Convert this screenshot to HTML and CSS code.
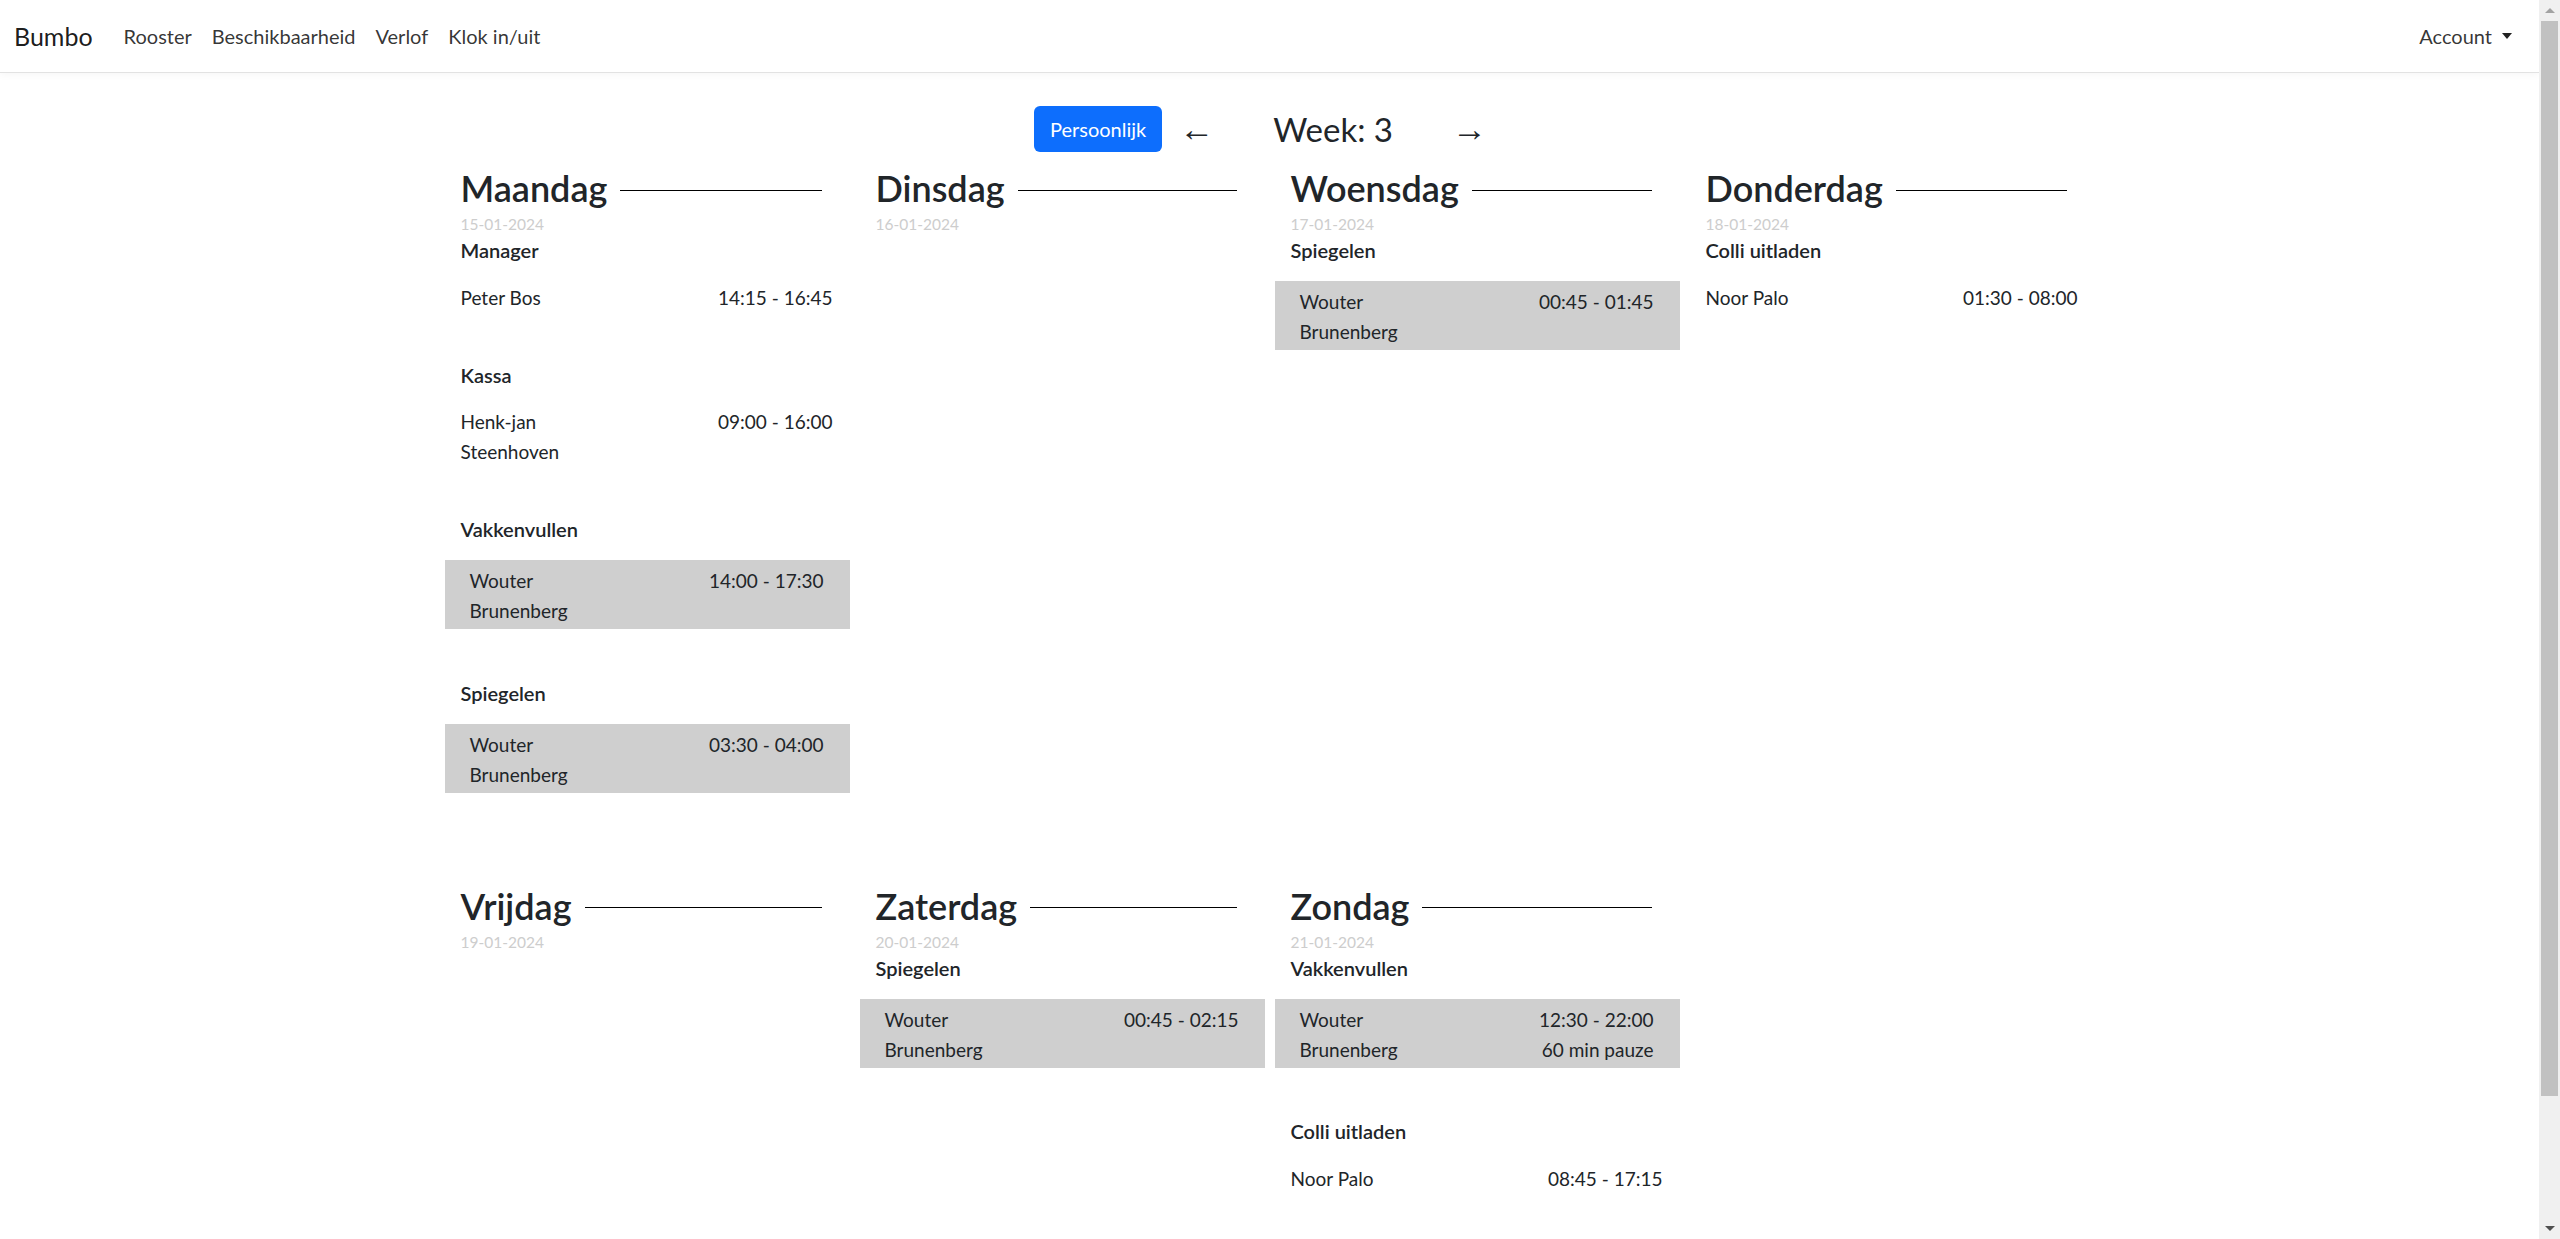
FILE: index.html
```html
<!DOCTYPE html>
<html lang="nl">
<head>
<meta charset="utf-8">
<title>Bumbo - Rooster</title>
<link rel="stylesheet" href="styles.css">
</head>
<body>
<div class="viewport">
  <nav class="navbar">
    <div class="nav-left">
      <a class="brand" href="#">Bumbo</a>
      <ul class="nav-links">
        <li><a href="#">Rooster</a></li>
        <li><a href="#">Beschikbaarheid</a></li>
        <li><a href="#">Verlof</a></li>
        <li><a href="#">Klok in/uit</a></li>
      </ul>
    </div>
    <a class="account" href="#">Account<span class="caret"></span></a>
  </nav>

  <main class="container">
    <div class="week-nav">
      <button class="btn-primary" type="button">Persoonlijk</button>
      <a class="arrow arrow-prev" href="#">←</a>
      <h3 class="week-title">Week: 3</h3>
      <a class="arrow arrow-next" href="#">→</a>
    </div>

    <div class="week-grid">
      <section class="day">
        <div class="day-head"><h3 class="day-name">Maandag</h3><span class="day-rule"></span></div>
        <div class="day-date">15-01-2024</div>
        <div class="roles">
          <div class="role">
            <h6 class="role-name">Manager</h6>
            <div class="shift"><span class="shift-name">Peter Bos</span><span class="shift-time">14:15 - 16:45</span></div>
          </div>
          <div class="role">
            <h6 class="role-name">Kassa</h6>
            <div class="shift"><span class="shift-name">Henk-jan Steenhoven</span><span class="shift-time">09:00 - 16:00</span></div>
          </div>
          <div class="role">
            <h6 class="role-name">Vakkenvullen</h6>
            <div class="shift shift-own"><span class="shift-name">Wouter Brunenberg</span><span class="shift-time">14:00 - 17:30</span></div>
          </div>
          <div class="role">
            <h6 class="role-name">Spiegelen</h6>
            <div class="shift shift-own"><span class="shift-name">Wouter Brunenberg</span><span class="shift-time">03:30 - 04:00</span></div>
          </div>
        </div>
      </section>

      <section class="day">
        <div class="day-head"><h3 class="day-name">Dinsdag</h3><span class="day-rule"></span></div>
        <div class="day-date">16-01-2024</div>
      </section>

      <section class="day">
        <div class="day-head"><h3 class="day-name">Woensdag</h3><span class="day-rule"></span></div>
        <div class="day-date">17-01-2024</div>
        <div class="roles">
          <div class="role">
            <h6 class="role-name">Spiegelen</h6>
            <div class="shift shift-own"><span class="shift-name">Wouter Brunenberg</span><span class="shift-time">00:45 - 01:45</span></div>
          </div>
        </div>
      </section>

      <section class="day">
        <div class="day-head"><h3 class="day-name">Donderdag</h3><span class="day-rule"></span></div>
        <div class="day-date">18-01-2024</div>
        <div class="roles">
          <div class="role">
            <h6 class="role-name">Colli uitladen</h6>
            <div class="shift"><span class="shift-name">Noor Palo</span><span class="shift-time">01:30 - 08:00</span></div>
          </div>
        </div>
      </section>

      <section class="day">
        <div class="day-head"><h3 class="day-name">Vrijdag</h3><span class="day-rule"></span></div>
        <div class="day-date">19-01-2024</div>
      </section>

      <section class="day">
        <div class="day-head"><h3 class="day-name">Zaterdag</h3><span class="day-rule"></span></div>
        <div class="day-date">20-01-2024</div>
        <div class="roles">
          <div class="role">
            <h6 class="role-name">Spiegelen</h6>
            <div class="shift shift-own"><span class="shift-name">Wouter Brunenberg</span><span class="shift-time">00:45 - 02:15</span></div>
          </div>
        </div>
      </section>

      <section class="day">
        <div class="day-head"><h3 class="day-name">Zondag</h3><span class="day-rule"></span></div>
        <div class="day-date">21-01-2024</div>
        <div class="roles">
          <div class="role">
            <h6 class="role-name">Vakkenvullen</h6>
            <div class="shift shift-own"><span class="shift-name">Wouter Brunenberg</span><span class="shift-time">12:30 - 22:00<br>60 min pauze</span></div>
          </div>
          <div class="role">
            <h6 class="role-name">Colli uitladen</h6>
            <div class="shift"><span class="shift-name">Noor Palo</span><span class="shift-time">08:45 - 17:15</span></div>
          </div>
        </div>
      </section>
    </div>
  </main>
</div>
<div class="scrollbar" aria-hidden="true">
  <span class="sb-arrow sb-up"></span>
  <span class="sb-thumb"></span>
  <span class="sb-track"></span>
  <span class="sb-arrow sb-down"></span>
</div>
</body>
</html>
```
FILE: styles.css
```css
* { box-sizing: border-box; }
html, body { margin: 0; height: 100%; }
body {
  display: flex;
  overflow: hidden;
  font-family: "Lato", "Noto Sans", sans-serif;
  font-size: 19px;
  line-height: 30px;
  color: #212529;
  background: #fff;
}
.viewport { flex: 1; min-width: 0; height: 100vh; overflow: hidden; }

/* navbar */
.navbar {
  height: 73px;
  border-bottom: 1px solid #e2e2e2;
  box-shadow: 0 2px 8px rgba(0, 0, 0, 0.04);
  display: flex;
  align-items: center;
  justify-content: space-between;
  padding: 0 27px 0 14px;
}
.nav-left { display: flex; align-items: center; }
.brand { font-size: 25px; line-height: 30px; color: rgba(0, 0, 0, 0.9); text-decoration: none; margin-right: 21px; }
.nav-links { display: flex; list-style: none; margin: 0; padding: 0; }
.nav-links a {
  display: block;
  font-size: 20px;
  line-height: 30px;
  padding: 0 10px;
  color: rgba(0, 0, 0, 0.8);
  text-decoration: none;
}
.account {
  display: flex;
  align-items: center;
  font-size: 20px;
  line-height: 30px;
  color: rgba(0, 0, 0, 0.8);
  text-decoration: none;
}
.caret {
  margin-left: 10px;
  width: 0;
  height: 0;
  border-top: 6px solid #222;
  border-left: 5px solid transparent;
  border-right: 5px solid transparent;
}

/* main */
.container { width: 1650px; margin: 0 auto; }
.week-nav {
  display: flex;
  justify-content: center;
  align-items: center;
  margin-top: 33px;
  padding-right: 18px;
}
.btn-primary {
  font: inherit;
  font-size: 20px;
  line-height: 30px;
  color: #fff;
  background: #0d6efd;
  border: 0;
  border-radius: 6px;
  padding: 8px 16px;
}
.arrow {
  font-family: "Liberation Sans", sans-serif;
  font-size: 35px;
  line-height: 30px;
  color: #212529;
  text-decoration: none;
}
.arrow-prev { margin-left: 17px; }
.week-title {
  margin: 0 59px;
  font-size: 33px;
  line-height: 42px;
  font-weight: 400;
}

.week-grid {
  display: grid;
  grid-template-columns: repeat(4, 405px);
  column-gap: 10px;
  row-gap: 92px;
  margin-top: 15px;
}
.day-head {
  display: flex;
  align-items: center;
  padding: 0 28px 0 16px;
}
.day-name {
  margin: 0;
  font-size: 36px;
  line-height: 42px;
  font-weight: 600;
}
.day-rule {
  flex: 1;
  height: 1px;
  margin: 4px 0 0 13px;
  background: #000;
}
.day-date {
  margin-top: 3px;
  padding-left: 16px;
  font-size: 15.5px;
  line-height: 25px;
  color: #cdcdcd;
}
.roles { display: flex; flex-direction: column; gap: 50.5px; }
.role-name {
  margin: 0 0 19px;
  padding: 1px 0 0 16px;
  font-size: 20px;
  line-height: 24px;
  font-weight: 600;
}
.shift {
  display: grid;
  grid-template-columns: 42% 1fr;
  padding: 1.5px 17px 0 16px;
  margin-bottom: -1.5px;
}
.shift-time { text-align: right; }
.shift-own {
  background: #cfcfcf;
  padding: 6px 26px 3px 25px;
  margin-bottom: 0;
}

/* fake window scrollbar */
.scrollbar {
  flex: none;
  width: 21px;
  height: 100vh;
  background: #f0f0f0;
  display: flex;
  flex-direction: column;
  align-items: center;
}
.sb-arrow { flex: none; height: 21px; display: flex; align-items: center; justify-content: center; }
.sb-arrow::before { content: ""; width: 0; height: 0; border-left: 5px solid transparent; border-right: 5px solid transparent; }
.sb-up::before { border-bottom: 5px solid #a3a3a3; }
.sb-down::before { border-top: 5px solid #505050; }
.sb-thumb { flex: none; width: 17px; height: 1075px; background: #c1c1c1; }
.sb-track { flex: 1; }
```
